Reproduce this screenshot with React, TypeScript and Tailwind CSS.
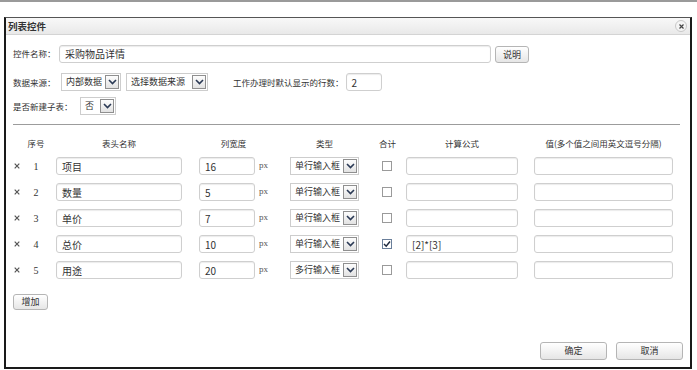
import React from "react"

const rows = [
  { n: 1, name: "项目", width: "16", type: "单行输入框", sum: false, formula: "" },
  { n: 2, name: "数量", width: "5", type: "单行输入框", sum: false, formula: "" },
  { n: 3, name: "单价", width: "7", type: "单行输入框", sum: false, formula: "" },
  { n: 4, name: "总价", width: "10", type: "单行输入框", sum: true, formula: "[2]*[3]" },
  { n: 5, name: "用途", width: "20", type: "多行输入框", sum: false, formula: "" },
]

function Chevron() {
  return (
    <span className="flex h-[14px] w-[14px] shrink-0 items-center justify-center border border-[#8f8f8f] bg-gradient-to-b from-[#fdfdfd] to-[#e2e2e2]">
      <svg width="9" height="6" viewBox="0 0 9 6">
        <path d="M1 1 L4.5 4.5 L8 1" fill="none" stroke="#2b3a55" strokeWidth="1.6" />
      </svg>
    </span>
  )
}

function Select({ label, className }: { label: string; className: string }) {
  return (
    <div className={"flex items-center justify-between gap-[1px] border border-[#cdcdcd] bg-white pl-[4px] pr-[1px] text-[9px] text-[#333] " + className}>
      <span className="whitespace-nowrap">{label}</span>
      <Chevron />
    </div>
  )
}

function Input({ value, className }: { value?: string; className: string }) {
  return (
    <div className={"flex items-center rounded-[3px] border border-[#cfcfcf] bg-white px-[5px] text-[10px] text-[#333] shadow-[inset_0_1px_1px_rgba(0,0,0,0.08)] " + className}>
      {value}
    </div>
  )
}

function Btn({ label, className }: { label: string; className: string }) {
  return (
    <div className={"flex items-center justify-center rounded-[3px] border border-[#b5b5b5] bg-gradient-to-b from-[#ffffff] to-[#e6e6e6] text-[9px] text-[#333] " + className}>
      {label}
    </div>
  )
}

function Checkbox({ checked }: { checked: boolean }) {
  return (
    <div className={"flex h-[10px] w-[10px] items-center justify-center border bg-white " + (checked ? "border-[#6a7f9a]" : "border-[#9a9a9a]")}>
      {checked && (
        <svg width="8" height="8" viewBox="0 0 8 8">
          <path d="M1 4 L3.2 6.2 L7 1.5" fill="none" stroke="#1f2b40" strokeWidth="1.5" />
        </svg>
      )}
    </div>
  )
}

export default function App() {
  return (
    <div className="h-[370px] w-[697px] overflow-hidden bg-white font-['Noto_Sans_CJK_SC',sans-serif] text-[#333]">
      <div className="h-[2px] w-full bg-[#9a9a9a]" />
      <div className="pl-[4px] pt-[15px]">
        <div className="flex h-[352px] w-[688px] flex-col border-b-[2px] border-l-[2px] border-r-[2px] border-t border-b-[#1a1a1a] border-l-[#1a1a1a] border-r-[#1a1a1a] border-t-[#555]">
          {/* title bar */}
          <div className="flex h-[17px] items-center justify-between border-b border-[#d4d4d4] bg-gradient-to-b from-[#f8f8f8] to-[#e9e9e9] pl-[2px] pr-[3px]">
            <span className="text-[9.5px] font-bold text-[#333]">列表控件</span>
            <span className="flex h-[12px] w-[12px] items-center justify-center rounded-full border border-[#c8c8c8] bg-[#f4f4f4]">
              <svg width="5" height="5" viewBox="0 0 5 5">
                <path d="M0.5 0.5 L4.5 4.5 M4.5 0.5 L0.5 4.5" stroke="#444" strokeWidth="1.2" />
              </svg>
            </span>
          </div>

          <div className="flex flex-1 flex-col pl-[7px] pr-[7px] text-[8.5px]">
            {/* name row */}
            <div className="mt-[9px] flex h-[19px] items-center">
              <span className="w-[46px] whitespace-nowrap">控件名称：</span>
              <Input value="采购物品详情" className="h-[18px] w-[432px]" />
              <Btn label="说明" className="ml-[4px] mt-[2px] h-[17px] w-[34px]" />
            </div>

            {/* data source row */}
            <div className="mt-[10px] flex h-[18px] items-center">
              <span className="w-[48px] whitespace-nowrap">数据来源：</span>
              <Select label="内部数据" className="h-[18px] w-[60px]" />
              <Select label="选择数据来源" className="ml-[5px] h-[18px] w-[82px]" />
              <span className="ml-[25px] whitespace-nowrap">工作办理时默认显示的行数：</span>
              <Input value="2" className="ml-[2px] h-[18px] w-[36px]" />
            </div>

            {/* sub table row */}
            <div className="mt-[6px] flex h-[18px] items-center">
              <span className="w-[67px] whitespace-nowrap">是否新建子表：</span>
              <Select label="否" className="h-[18px] w-[36px]" />
            </div>

            <div className="mt-[9px] h-px w-[667px] bg-[#9c9c9c]" />

            {/* header */}
            <div className="mt-[8px] flex h-[20px] items-center whitespace-nowrap">
              <span className="w-[7px]" />
              <span className="w-[32px] text-center">序号</span>
              <span className="ml-[4px] w-[126px] text-center">表头名称</span>
              <span className="ml-[17px] w-[69px] text-center">列宽度</span>
              <span className="ml-[22px] w-[69px] text-center">类型</span>
              <span className="ml-[20px] w-[16px] text-center">合计</span>
              <span className="ml-[11px] w-[112px] text-center">计算公式</span>
              <span className="ml-[16px] w-[139px] text-center">值(多个值之间用英文逗号分隔)</span>
            </div>

            {/* rows */}
            <div className="mt-[4px] flex flex-col gap-[8px]">
              {rows.map((r) => (
                <div key={r.n} className="flex h-[18px] items-center">
                  <span className="flex w-[7px] justify-center">
                    <svg width="6" height="6" viewBox="0 0 6 6">
                      <path d="M0.7 0.7 L5.3 5.3 M5.3 0.7 L0.7 5.3" stroke="#555" strokeWidth="1.2" />
                    </svg>
                  </span>
                  <span className="w-[32px] text-center font-['Liberation_Serif',serif] text-[10px]">{r.n}</span>
                  <Input value={r.name} className="ml-[4px] h-[18px] w-[126px]" />
                  <div className="ml-[17px] flex w-[69px] items-center">
                    <Input value={r.width} className="h-[18px] w-[57px]" />
                    <span className="ml-[4px] font-['Liberation_Serif',serif] text-[9px] text-[#555]">px</span>
                  </div>
                  <Select label={r.type} className="ml-[22px] h-[18px] w-[69px]" />
                  <div className="ml-[20px] flex w-[16px] justify-center">
                    <Checkbox checked={r.sum} />
                  </div>
                  <Input value={r.formula} className="ml-[11px] h-[18px] w-[112px]" />
                  <Input className="ml-[16px] h-[18px] w-[139px]" />
                </div>
              ))}
            </div>

            <Btn label="增加" className="mt-[15px] h-[16px] w-[35px]" />

            <div className="mt-[32px] flex justify-end gap-[9px]">
              <Btn label="确定" className="h-[18px] w-[67px]" />
              <Btn label="取消" className="h-[18px] w-[67px]" />
            </div>
          </div>
        </div>
      </div>
    </div>
  )
}
